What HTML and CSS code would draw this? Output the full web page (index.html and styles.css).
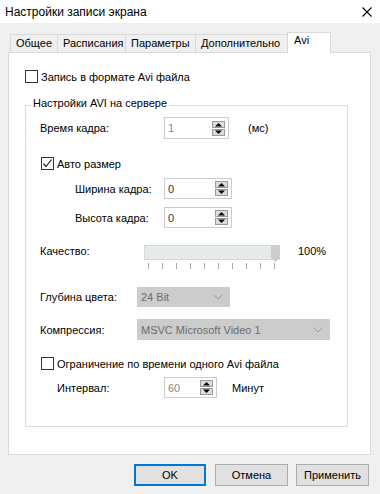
FILE: index.html
```html
<!DOCTYPE html>
<html lang="ru">
<head>
    <meta charset="UTF-8">
    <title>Настройки записи экрана</title>
    <link rel="stylesheet" href="styles.css">
</head>
<body>
    <div class="titlebar">
        <span class="title">Настройки записи экрана</span>
        <svg class="close" width="10" height="10" viewBox="0 0 10 10"><path d="M0.5 0.5L9.5 9.5M9.5 0.5L0.5 9.5" stroke="#000" stroke-width="1.1" fill="none"/></svg>
    </div>
    <div class="tabs">
        <div class="tab t1">Общее</div>
        <div class="tab t2">Расписания</div>
        <div class="tab t3">Параметры</div>
        <div class="tab t4">Дополнительно</div>
        <div class="tab active">Avi</div>
    </div>
    <div class="panel">
        <div class="check top-check"><span class="box"></span>Запись в формате Avi файла</div>
        <div class="group">
            <div class="group-title">Настройки AVI на сервере</div>
            <div class="row r-time">
                <span class="lbl">Время кадра:</span>
                <div class="spin w65"><span class="val dim">1</span>
                    <svg width="13" height="15" viewBox="0 0 13 15"><rect x="0.5" y="0.5" width="12" height="6" fill="#dcdcdc" stroke="#9a9a9a"/><rect x="0.5" y="8.5" width="12" height="6" fill="#dcdcdc" stroke="#9a9a9a"/><path d="M3 5.5H10L6.5 2Z" fill="#000"/><path d="M3 9.5H10L6.5 13Z" fill="#000"/></svg>
                </div>
                <span class="unit">(мс)</span>
            </div>
            <div class="check row r-auto"><span class="box"><svg width="11" height="11" viewBox="0 0 11 11"><path d="M1.5 5.5L4 8.5L9.5 1.5" stroke="#222" stroke-width="1.2" fill="none"/></svg></span>Авто размер</div>
            <div class="row r-w">
                <span class="lbl">Ширина кадра:</span>
                <div class="spin w68"><span class="val">0</span>
                    <svg width="13" height="15" viewBox="0 0 13 15"><rect x="0.5" y="0.5" width="12" height="6" fill="#dcdcdc" stroke="#9a9a9a"/><rect x="0.5" y="8.5" width="12" height="6" fill="#dcdcdc" stroke="#9a9a9a"/><path d="M3 5.5H10L6.5 2Z" fill="#000"/><path d="M3 9.5H10L6.5 13Z" fill="#000"/></svg>
                </div>
            </div>
            <div class="row r-w r-h">
                <span class="lbl">Высота кадра:</span>
                <div class="spin w68"><span class="val">0</span>
                    <svg width="13" height="15" viewBox="0 0 13 15"><rect x="0.5" y="0.5" width="12" height="6" fill="#dcdcdc" stroke="#9a9a9a"/><rect x="0.5" y="8.5" width="12" height="6" fill="#dcdcdc" stroke="#9a9a9a"/><path d="M3 5.5H10L6.5 2Z" fill="#000"/><path d="M3 9.5H10L6.5 13Z" fill="#000"/></svg>
                </div>
            </div>
            <div class="row r-q">
                <span class="lbl">Качество:</span>
                <div class="slider">
                    <div class="track">
                        <svg class="thumb" width="9" height="17" viewBox="0 0 9 17"><path d="M0 0H9V13L4.5 17L0 13Z" fill="#cdcdcd"/></svg>
                    </div>
                    <div class="ticks">
                        <i></i><i></i><i></i><i></i><i></i><i></i><i></i><i></i><i></i><i></i>
                    </div>
                </div>
                <span class="pct">100%</span>
            </div>
            <div class="row r-depth">
                <span class="lbl">Глубина цвета:</span>
                <div class="combo w93"><span>24 Bit</span>
                    <svg width="10" height="6" viewBox="0 0 10 6"><path d="M0.5 0.5L5 5L9.5 0.5" stroke="#9a9a9a" fill="none"/></svg>
                </div>
            </div>
            <div class="row r-comp">
                <span class="lbl">Компрессия:</span>
                <div class="combo w193"><span>MSVC Microsoft Video 1</span>
                    <svg width="10" height="6" viewBox="0 0 10 6"><path d="M0.5 0.5L5 5L9.5 0.5" stroke="#9a9a9a" fill="none"/></svg>
                </div>
            </div>
            <div class="check row r-limit"><span class="box"></span>Ограничение по времени одного Avi файла</div>
            <div class="row r-int">
                <span class="lbl">Интервал:</span>
                <div class="spin w53"><span class="val dim">60</span>
                    <svg width="13" height="15" viewBox="0 0 13 15"><rect x="0.5" y="0.5" width="12" height="6" fill="#dcdcdc" stroke="#9a9a9a"/><rect x="0.5" y="8.5" width="12" height="6" fill="#dcdcdc" stroke="#9a9a9a"/><path d="M3 5.5H10L6.5 2Z" fill="#000"/><path d="M3 9.5H10L6.5 13Z" fill="#000"/></svg>
                </div>
                <span class="unit min">Минут</span>
            </div>
        </div>
    </div>
    <div class="buttons">
        <button class="button default">OK</button>
        <button class="button b2">Отмена</button>
        <button class="button b3">Применить</button>
    </div>
</body>
</html>
```

FILE: styles.css
```css
body {
    margin: 0;
    width: 380px;
    height: 494px;
    overflow: hidden;
    background: #f0f0f0;
    font-family: "Liberation Sans", Arial, sans-serif;
    font-size: 11px;
    color: #000;
}
.titlebar {
    height: 23px;
    background: #fff;
    display: flex;
    align-items: center;
    justify-content: space-between;
    padding: 0 8px 0 5px;
}
.title {
    font-size: 12px;
}
.tabs {
    display: flex;
    align-items: flex-end;
    height: 20px;
    margin-top: 9px;
    padding-left: 10px;
}
.tab {
    box-sizing: border-box;
    height: 18px;
    line-height: 16px;
    padding-left: 5px;
    border: 1px solid #d9d9d9;
    border-right: none;
    border-bottom: none;
    background: #f0f0f0;
}
.t1 { width: 47px; }
.t2 { width: 68px; }
.t3 { width: 70px; }
.t4 { width: 92px; }
.tab.active {
    width: 44px;
    height: 21px;
    line-height: 15px;
    padding-left: 6px;
    border-right: 1px solid #d9d9d9;
    background: #fff;
    margin-bottom: -1px;
    position: relative;
    z-index: 1;
}
.panel {
    box-sizing: border-box;
    margin-left: 8px;
    width: 363px;
    height: 403px;
    background: #fff;
    border: 1px solid #d9d9d9;
    padding-top: 17px;
    padding-left: 16px;
}
.check {
    display: flex;
    align-items: center;
    height: 13px;
}
.box {
    box-sizing: border-box;
    width: 13px;
    height: 13px;
    border: 1px solid #333;
    background: #fff;
    margin-right: 3px;
    display: flex;
    align-items: center;
    justify-content: center;
}
.group {
    box-sizing: border-box;
    width: 323px;
    margin-top: 22px;
    border: 1px solid #dcdcdc;
    padding: 0 0 28px 14px;
}
.group-title {
    width: fit-content;
    height: 14px;
    line-height: 14px;
    margin: -10px 0 0 -9px;
    padding: 0 2px;
    background: #fff;
}
.row {
    display: flex;
    align-items: center;
}
.r-time { height: 22px; margin-top: 7px; }
.r-time .lbl { width: 124px; }
.r-auto { margin-top: 18px; margin-left: 1px; }
.r-w { height: 21px; margin-top: 8px; padding-left: 35px; }
.r-w .lbl { width: 89px; }
.r-q { align-items: flex-start; margin-top: 17px; }
.r-q .lbl { width: 104px; line-height: 13px; }
.r-depth { height: 20px; margin-top: 18px; }
.r-depth .lbl,
.r-comp .lbl { width: 97px; }
.r-comp { height: 21px; margin-top: 12px; }
.r-limit { margin-top: 17px; margin-left: 1px; }
.r-int { height: 21px; margin-top: 7px; padding-left: 17px; }
.r-int .lbl { width: 107px; }
.spin {
    box-sizing: border-box;
    height: 100%;
    border: 1px solid #cccccc;
    display: flex;
    align-items: center;
    justify-content: space-between;
    padding: 0 3px 0 3px;
}
.w65 { width: 65px; }
.w68 { width: 68px; }
.w53 { width: 53px; }
.val { color: #333; }
.val.dim { color: #8a8a8a; }
.unit { margin-left: 19px; }
.unit.min { margin-left: 15px; }
.slider {
    width: 136px;
}
.track {
    box-sizing: border-box;
    height: 15px;
    background: #e7eaea;
    border: 1px solid #d6d6d6;
    display: flex;
    justify-content: flex-end;
}
.thumb {
    margin-top: -1px;
    margin-right: -1px;
}
.ticks {
    display: flex;
    justify-content: space-between;
    margin-top: 3px;
    padding: 0 5px 0 4px;
}
.ticks i {
    width: 1px;
    height: 6px;
    background: #a8a8a8;
}
.pct {
    margin-left: 18px;
    line-height: 13px;
}
.combo {
    box-sizing: border-box;
    height: 100%;
    background: #cccccc;
    border: 1px solid #cccccc;
    color: #6d6d6d;
    display: flex;
    align-items: center;
    justify-content: space-between;
    padding: 0 6px 0 3px;
}
.w93 { width: 93px; }
.w193 { width: 193px; }
.buttons {
    display: flex;
    justify-content: flex-end;
    margin-top: 9px;
    padding-right: 11px;
}
.button {
    box-sizing: border-box;
    width: 73px;
    height: 22px;
    background: #e1e1e1;
    border: 1px solid #adadad;
    font-family: "Liberation Sans", Arial, sans-serif;
    font-size: 11px;
    color: #000;
    padding: 0;
}
.button.default {
    width: 72px;
    border: 2px solid #0078d7;
}
.b2 { margin-left: 9px; }
.b3 { margin-left: 8px; }
```
